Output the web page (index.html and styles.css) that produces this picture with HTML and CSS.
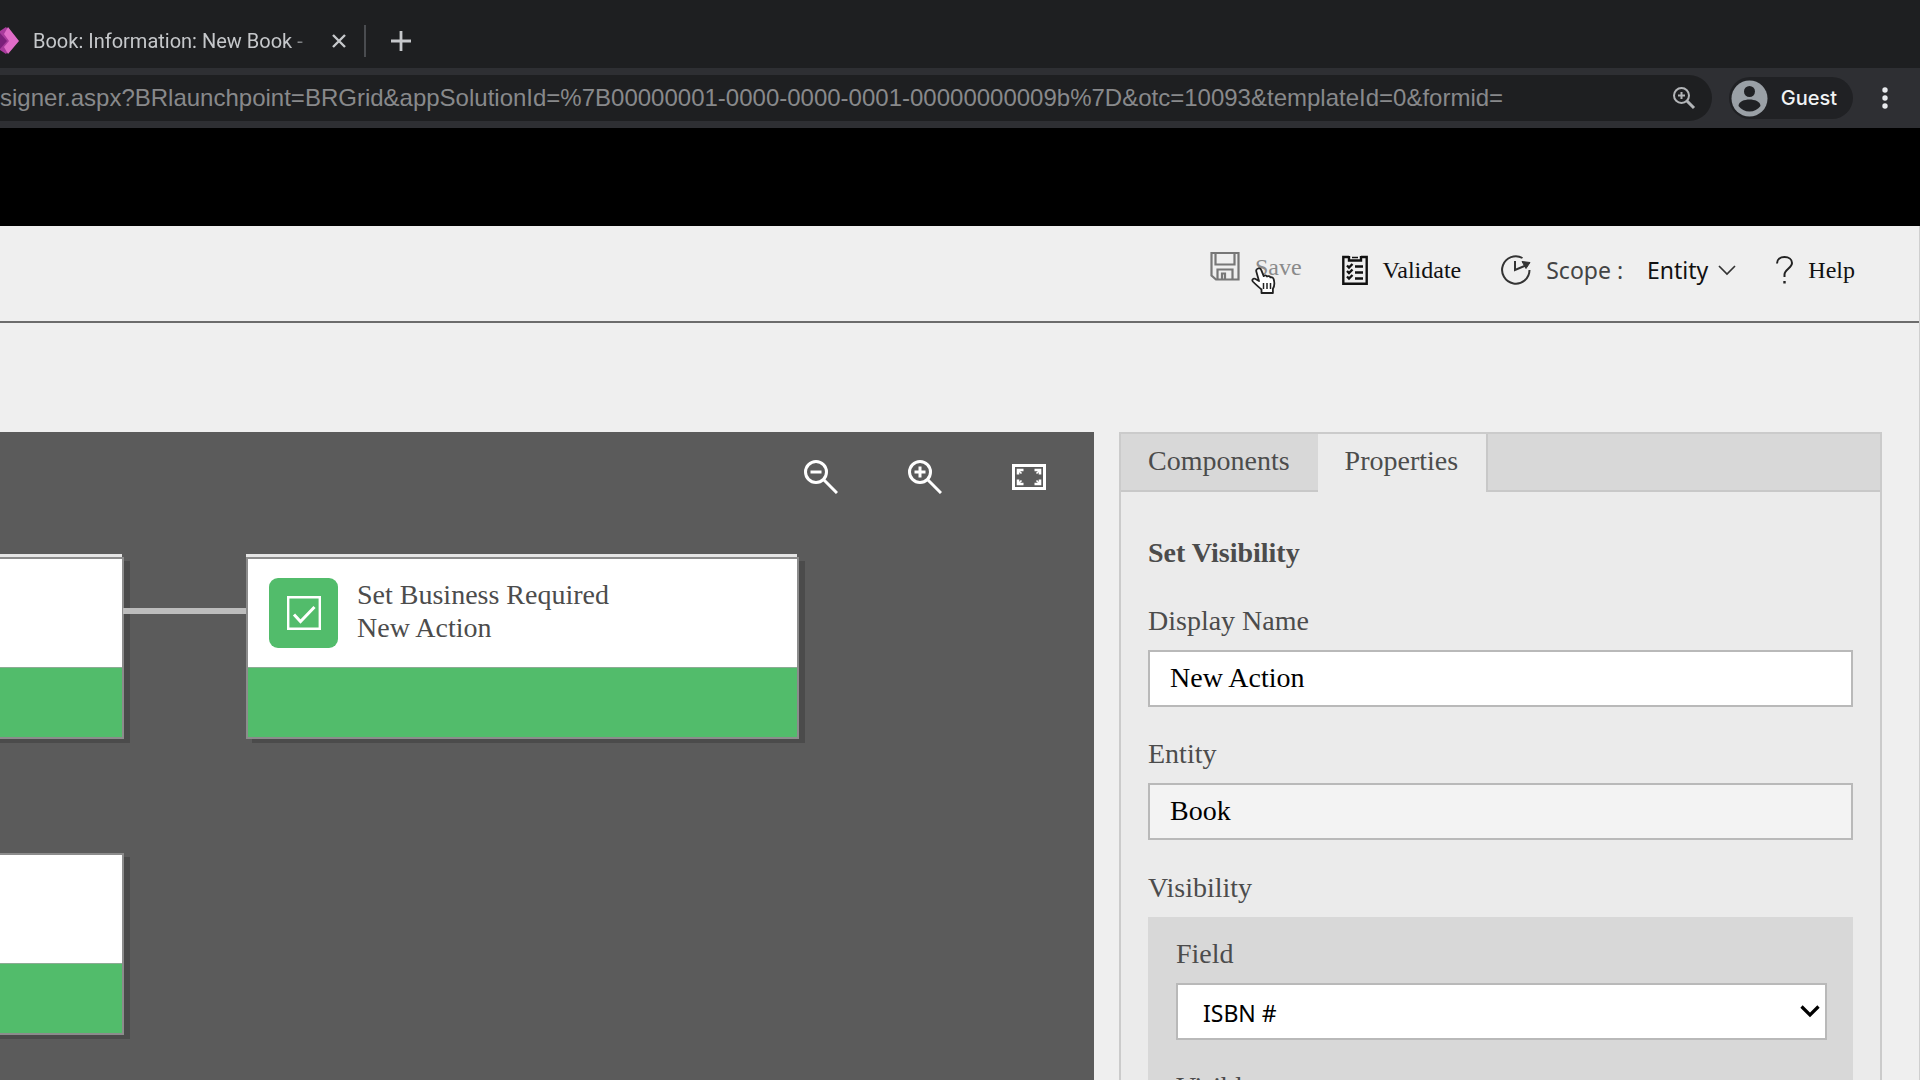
FILE: index.html
```html
<!DOCTYPE html>
<html lang="en">
<head>
<meta charset="utf-8">
<title>Book: Information: New Book</title>
<link rel="stylesheet" href="styles.css">
</head>
<body>
<header class="browser">
  <div class="tabstrip">
    <svg class="favicon" width="20" height="28" viewBox="0 0 20 28" aria-hidden="true">
      <path d="M0 4 6 0l5 6v15l-5 6-6-4z" fill="#a83a9c"/>
      <path d="M8 0 19 14 8 27 4 20l5-6-5-7z" fill="#e06cc8"/>
      <path d="M0 6 7 14 0 22z" fill="#7b1f7a"/>
    </svg>
    <span class="tab-title">Book: Information: New Book -</span>
    <button class="icon-button tab-close" aria-label="Close tab">
      <svg width="16" height="16" viewBox="0 0 16 16"><path d="M2 2l12 12M14 2 2 14" stroke="#c6c8cb" stroke-width="2.4" fill="none"/></svg>
    </button>
    <span class="tab-divider"></span>
    <button class="icon-button" aria-label="New tab">
      <svg width="20" height="20" viewBox="0 0 20 20"><path d="M10 0v20M0 10h20" stroke="#c6c8cb" stroke-width="2.8" fill="none"/></svg>
    </button>
  </div>
  <div class="addressbar">
    <div class="url">
      <span class="url-text">signer.aspx?BRlaunchpoint=BRGrid&amp;appSolutionId=%7B00000001-0000-0000-0001-00000000009b%7D&amp;otc=10093&amp;templateId=0&amp;formid=</span>
      <button class="icon-button" aria-label="Zoom">
        <svg width="24" height="24" viewBox="0 0 24 24" fill="none" stroke="#b3b5b8" stroke-width="2"><circle cx="9.500" cy="9.500" r="7.500"/><path d="M15 15l7 7" stroke-width="3"/><path d="M9.500 6v7M6 9.500h7"/></svg>
      </button>
    </div>
    <button class="guest">
      <svg width="37" height="37" viewBox="0 0 37 37" aria-hidden="true"><circle cx="18.500" cy="18.500" r="18" fill="#9aa0a6"/><circle cx="18.500" cy="11.500" r="5.500" fill="#202124"/><path d="M7.500 26c0-4.500 6-6.500 11-6.500s11 2 11 6.500c-2.500 3.500-6.500 5.500-11 5.500S10 29.500 7.500 26z" fill="#202124"/></svg>
      Guest
    </button>
    <button class="icon-button" aria-label="Menu">
      <svg width="6" height="24" viewBox="0 0 6 24" fill="#e8eaed"><circle cx="3" cy="4" r="2.700"/><circle cx="3" cy="12" r="2.700"/><circle cx="3" cy="20" r="2.700"/></svg>
    </button>
  </div>
</header>
<div class="banner"></div>
<main class="designer">
  <div class="commands">
    <button class="command command-save">
      <svg width="30" height="29" viewBox="0 0 30 29" fill="none" stroke="#777" stroke-width="2.2"><path d="M1.500 1h27v26.500H6L1.500 23.500z"/><path d="M5.500 1v11.500h19V1"/><path d="M7.500 27v-9.500h15V27M12 27v-5.500h3V27"/></svg>
      Save
      <svg class="pointer" width="26" height="28" viewBox="0 0 26 28" aria-hidden="true"><path d="M7 1.500c1.500-.7 2.800.2 3.300 1.600l2.400 6c1-1 2.600-.8 3.300.4 1.200-.8 2.800-.3 3.400.9 1.400-.5 2.900.3 3.300 1.800.9 3.300.9 7-.8 9.500V26H10.500v-3.500C8 20 4.500 17.500 1.800 14.500c-1.200-1.500.4-3.500 2.200-2.700L8 14 5.300 4.400c-.4-1.300.4-2.400 1.700-2.900z" fill="#fff" stroke="#222" stroke-width="1.800" stroke-linejoin="round"/><path d="M12.500 16v6M16 16v6M19.500 16v6" stroke="#222" stroke-width="1.500"/></svg>
    </button>
    <button class="command">
      <svg width="26" height="30" viewBox="0 0 26 30" fill="none" stroke="#111" stroke-width="2.400"><path d="M7 2H1.300v26.700h23.400V2H19"/><path d="M7 1v4.500h12V1" /><path d="M10 2.500h6" stroke-width="1.500"/><path d="M5 10.500l2 2 3.500-3.500M5 16l2 2 3.500-3.500M5 21.500l2 2 3.500-3.500" stroke-width="2.400"/><path d="M13 11.500h8M13 17.500h8M13 23.500h8" stroke-width="2.400"/></svg>
      Validate
    </button>
    <div class="command scope">
      <svg width="30" height="30" viewBox="0 0 30 30" fill="none" stroke="#333" stroke-width="2"><path d="M21.500 3A13.700 13.700 0 1 0 28.500 15"/><path d="M14 6v9l12-5"/><path d="M21 6.500l8 1-4 6z" fill="#333" stroke-width="1"/></svg>
      <span>Scope :</span>
      <button class="scope-value">Entity
        <svg width="18" height="12" viewBox="0 0 18 12" fill="none" stroke="#333" stroke-width="1.700"><path d="M1 2l8 8 8-8"/></svg>
      </button>
    </div>
    <button class="command">
      <svg width="17" height="28" viewBox="0 0 17 28" fill="none" stroke="#222" stroke-width="2"><path d="M1 7.500C1 3.500 4 1 8.500 1S16 3.500 16 7c0 5-7.500 6.500-7.500 11.500V21"/><path d="M8.500 25v2.500" stroke-width="2.400"/></svg>
      Help
    </button>
  </div>
  <div class="workspace">
    <section class="canvas">
      <div class="canvas-tools">
        <button class="icon-button" aria-label="Zoom out">
          <svg width="34" height="34" viewBox="0 0 34 34" fill="none" stroke="#fff" stroke-width="3"><circle cx="12" cy="12" r="10.500"/><path d="M19.500 19.500 33 33M6.500 12h11"/></svg>
        </button>
        <button class="icon-button" aria-label="Zoom in">
          <svg width="34" height="34" viewBox="0 0 34 34" fill="none" stroke="#fff" stroke-width="3"><circle cx="12" cy="12" r="10.500"/><path d="M19.500 19.500 33 33M6.500 12h11M12 6.500v11"/></svg>
        </button>
        <button class="icon-button" aria-label="Fit to canvas">
          <svg width="34" height="34" viewBox="0 0 34 34" fill="none" stroke="#fff"><path d="M1.500 5.500h31v23h-31z" stroke-width="3"/><path d="M6 14.500V10h5.500M28 14.500V10h-5.500M6 19.500V24h5.500M28 19.500V24h-5.500" stroke-width="2.600"/><path d="M6 10l3.500 3.500M28 10l-3.500 3.500M6 24l3.500-3.500M28 24l-3.500-3.500" stroke-width="1.600"/></svg>
        </button>
      </div>
      <div class="connector"></div>
      <article class="node node-stacked node-previous"><div class="node-head"></div><div class="node-foot"></div></article>
      <article class="node node-stacked node-required">
        <div class="node-head">
          <span class="node-icon"><svg width="34" height="34" viewBox="0 0 34 34" fill="none" stroke="#fff" stroke-width="2.400"><path d="M1.200 1.200h31.600v31.600H1.200z"/><path d="M7 18.500l6.500 7L27.500 11" stroke-width="3"/></svg></span>
          <div class="node-text">Set Business Required<br>New Action</div>
        </div>
        <div class="node-foot"></div>
      </article>
      <article class="node node-lower"><div class="node-head"></div><div class="node-foot"></div></article>
    </section>
    <aside class="panel">
      <div class="tabs" role="tablist">
        <button class="tab" role="tab" aria-selected="false">Components</button>
        <button class="tab tab-active" role="tab" aria-selected="true">Properties</button>
        <span class="tabs-rest"></span>
      </div>
      <form class="properties">
        <h2 class="title">Set Visibility</h2>
        <div class="field">
          <label for="display-name">Display Name</label>
          <input class="control" id="display-name" type="text" value="New Action">
        </div>
        <div class="field">
          <label for="entity">Entity</label>
          <input class="control" id="entity" type="text" value="Book" readonly>
        </div>
        <fieldset class="group">
          <legend>Visibility</legend>
          <div class="group-body">
            <div class="field">
              <label for="field">Field</label>
              <div class="select-wrap">
                <select class="control" id="field"><option>ISBN #</option></select>
                <svg class="select-arrow" width="20" height="13" viewBox="0 0 20 13" fill="none" stroke="#000" stroke-width="3.200" aria-hidden="true"><path d="M1.500 1.500 10 10l8.500-8.500"/></svg>
              </div>
            </div>
            <div class="field">
              <label for="visible">Visible</label>
              <select class="control" id="visible"><option>Yes</option></select>
            </div>
          </div>
        </fieldset>
      </form>
    </aside>
  </div>
</main>
</body>
</html>
```
FILE: styles.css
```css
* { box-sizing: border-box; }

body {
  margin: 0;
  height: 100vh;
  display: flex;
  flex-direction: column;
  overflow: hidden;
  background: #efefef;
  color: #4c4c4c;
  font: 28px/32px "Liberation Serif", "Times New Roman", serif;
}

button {
  border: 0;
  padding: 0;
  background: none;
  color: inherit;
  font: inherit;
}

svg { display: block; flex: none; }

.icon-button { display: flex; }

/* Browser chrome */
.browser {
  flex: none;
  background: #1e1f21;
  color: #c6c8cb;
  font: 20px/28px Inter, sans-serif;
}

.tabstrip {
  display: flex;
  align-items: center;
  height: 68px;
  padding: 14px 0 0;
}

.tab-title {
  width: 284px;
  margin-left: 13px;
  font-family: Roboto, sans-serif;
  white-space: nowrap;
  -webkit-mask-image: linear-gradient(90deg, #000 90%, transparent);
  mask-image: linear-gradient(90deg, #000 90%, transparent);
}

.tab-close { margin-left: 14px; }

.tab-divider {
  width: 2px;
  height: 32px;
  margin: 0 25px 0 17px;
  background: #4a4c50;
}

.addressbar {
  display: flex;
  align-items: center;
  height: 60px;
  padding-right: 32px;
  background: #2e2f33;
}

.url {
  flex: 1;
  display: flex;
  align-items: center;
  justify-content: space-between;
  min-width: 0;
  height: 46px;
  padding-right: 16px;
  border-radius: 0 23px 23px 0;
  background: #1e1f21;
  color: #88898b;
}

.url-text {
  font-family: "Liberation Sans", Arial, sans-serif;
  font-size: 24px;
  white-space: nowrap;
}

.guest {
  display: flex;
  align-items: center;
  gap: 13px;
  height: 42px;
  margin: 0 29px 0 17px;
  padding: 0 16px 0 2px;
  border-radius: 21px;
  background: #202124;
  color: #f1f3f4;
  font-weight: 500;
}

.banner {
  flex: none;
  height: 98px;
  background: #000;
}

/* Designer */
.designer {
  flex: 1;
  display: flex;
  flex-direction: column;
  min-height: 0;
  border-right: 1px solid #cfcfcf;
}

.commands {
  display: flex;
  align-items: center;
  justify-content: flex-end;
  gap: 40px;
  height: 97px;
  padding: 0 64px 8px 0;
  border-bottom: 2px solid #6c6c6c;
  color: #111;
  font-size: 24px;
}

.command {
  display: flex;
  align-items: center;
  gap: 15px;
}

.command-save {
  position: relative;
  padding-bottom: 6px;
  color: #8a8a8a;
}

.pointer {
  position: absolute;
  left: 41px;
  top: 16px;
}

.scope {
  color: #444;
  font-family: "Noto Sans", sans-serif;
  font-size: 23px;
}

.scope-value {
  display: flex;
  align-items: center;
  gap: 10px;
  margin-left: 9px;
  color: #111;
}

.workspace {
  flex: 1;
  display: grid;
  grid-template-columns: minmax(0, 1fr) 763px;
  gap: 25px;
  min-height: 0;
  padding: 109px 37px 0 0;
}

.canvas {
  position: relative;
  overflow: hidden;
  background: #5b5b5b;
}

.canvas-tools {
  display: flex;
  justify-content: flex-end;
  gap: 70px;
  padding: 28px 48px 0 0;
}

/* Diagram nodes are placed freely on the canvas */
.node {
  position: absolute;
  width: 553px;
  border: 2px solid #8c8c8c;
  background: #fff;
  box-shadow: 6px 4px 0 #4b4b4b;
}

.node-stacked::before {
  content: "";
  position: absolute;
  left: -2px;
  right: 0;
  top: -5px;
  height: 3px;
  background: #e6e6e6;
}

.node-required { left: 246px; top: 125px; }
.node-previous { left: -429px; top: 125px; }
.node-lower { left: -429px; top: 421px; }

.node-head {
  display: flex;
  align-items: center;
  gap: 19px;
  height: 108px;
  padding-left: 21px;
}

.node-text {
  padding-bottom: 4px;
  line-height: 33px;
}

.node-foot {
  height: 70px;
  border-top: 1px solid #8cab94;
  background: #52bc6b;
}

.node-icon {
  display: grid;
  place-items: center;
  width: 69px;
  height: 70px;
  border-radius: 9px;
  background: #52bc6b;
}

.connector {
  position: absolute;
  left: 123px;
  top: 176px;
  width: 123px;
  height: 6px;
  z-index: 1;
  background: #bdbdbd;
}

/* Properties panel */
.panel {
  border: 2px solid #cbcbcb;
  border-bottom: 0;
  background: #ebebeb;
  overflow: hidden;
}

.tabs {
  display: flex;
  height: 58px;
}

.tab {
  padding: 0 28px 2px 27px;
  border-bottom: 2px solid #c8c8c8;
  background: #d8d8d8;
}

.tab-active {
  border-bottom-color: #ebebeb;
  background: #ebebeb;
}

.tabs-rest {
  flex: 1;
  border-bottom: 2px solid #c8c8c8;
  border-left: 2px solid #c8c8c8;
  background: #d8d8d8;
}

.properties {
  padding: 45px 27px 0;
}

.title {
  margin: 0 0 36px;
  font-size: 28px;
  line-height: 32px;
}

.field { margin-bottom: 32px; }

.field label,
.group legend {
  display: block;
  margin-bottom: 13px;
  padding: 0;
}

.control {
  display: block;
  width: 100%;
  height: 57px;
  margin: 0;
  padding: 0 20px 2px;
  border: 2px solid #b9b9b9;
  border-radius: 0;
  outline: 0;
  background: #fff;
  color: #000;
  font: inherit;
}

.control:read-only:not(select) { background: #f3f3f3; }

select.control {
  appearance: none;
  padding: 2px 25px 0;
  font-family: "Noto Sans", sans-serif;
  font-size: 23px;
}

.field + .field { margin-top: -1px; }

.group {
  min-width: 0;
  margin: 0;
  padding: 0;
  border: 0;
}

.group-body {
  padding: 21px 26px 0 28px;
  background: #d8d8d8;
}

.select-wrap { position: relative; }

.select-arrow {
  position: absolute;
  right: 7px;
  top: 22px;
  pointer-events: none;
}
```
